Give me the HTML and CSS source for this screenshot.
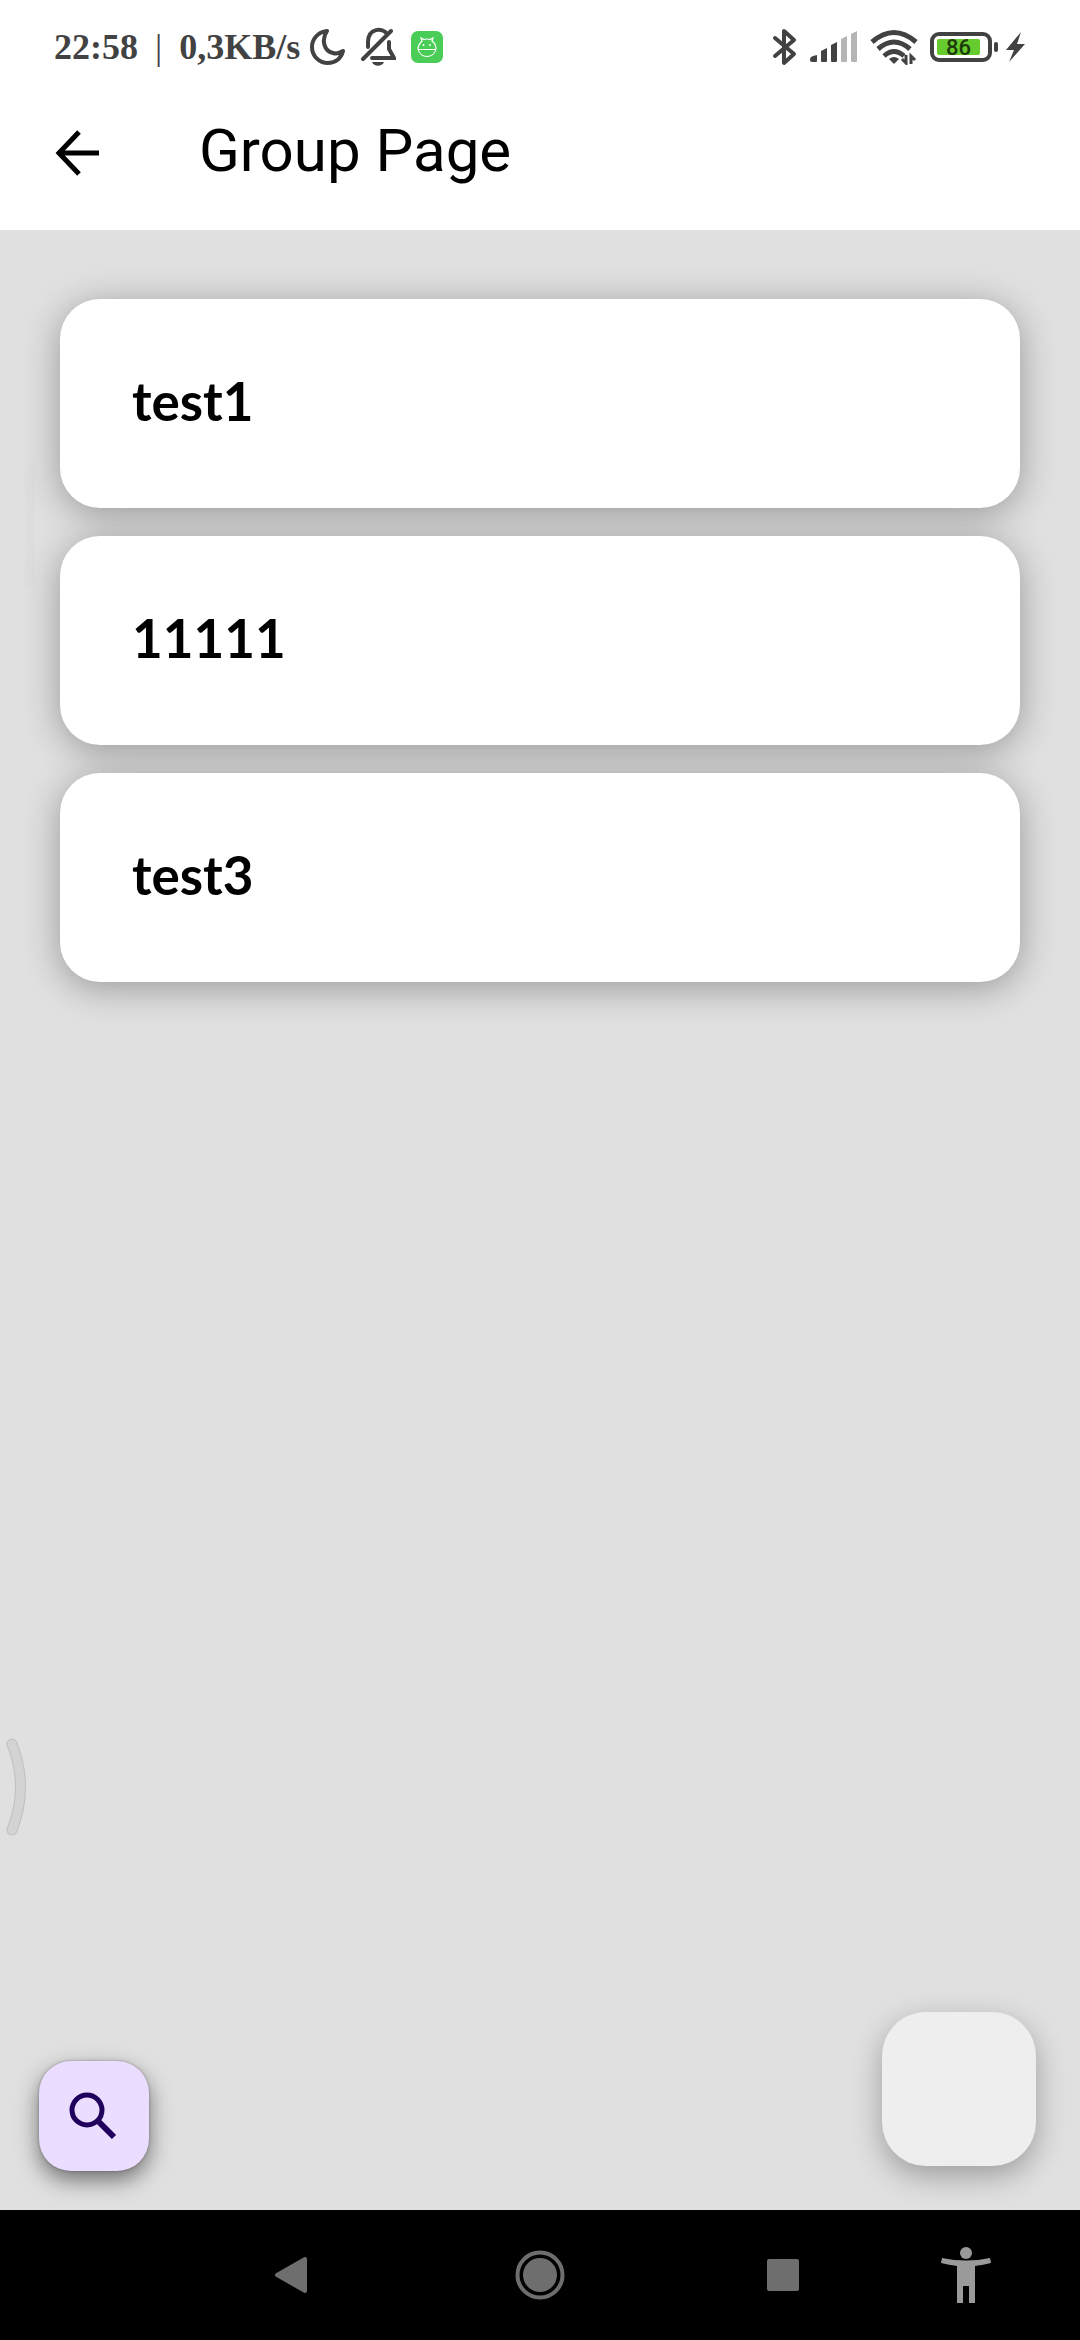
FILE: index.html
```html
<!DOCTYPE html>
<html lang="en">
<head>
<meta charset="utf-8">
<meta name="viewport" content="width=device-width, initial-scale=1">
<title>Group Page</title>
<link rel="stylesheet" href="styles.css">
</head>
<body>
<div class="status-bar">
  <div class="status-left">
    <span class="status-text">22:58 <span class="divider">|</span> 0,3KB/s</span>
    <svg class="moon" width="36" height="38" viewBox="0 0 36 38" fill="none" stroke="#424242" stroke-width="4" stroke-linejoin="round"><path d="M18 3C8 4 3 12 3 19c0 9 7 16 16 16 7 0 13-4 15-12-3 2-7 3-10 2C15 23 12 12 18 3Z"/></svg>
    <svg class="bell" width="36" height="40" viewBox="0 0 36 40" fill="none" stroke="#424242" stroke-width="4" stroke-linecap="round"><path d="M8 20v-5C8 1 23 0 27 7M3 32 31 4M29 15v7l5 9H12"/><path d="M12 35h12c-2 5-10 5-12 0Z" fill="#424242" stroke="none"/></svg>
    <svg class="app-badge" width="32" height="32" viewBox="0 0 32 32"><rect width="32" height="32" rx="7" fill="#4acd56"/><g fill="none" stroke="#fff" stroke-width="1.2"><path d="M7 18c0-4 2-6 4-8l-1-3 3 1.500q3-1 6 0L22 7l-1 3c3 2 4 4 4 8-2 10-16 10-18 0ZM7 18.500h18"/></g><circle cx="12.500" cy="14" r="1" fill="#fff"/><circle cx="19" cy="14" r="1" fill="#fff"/></svg>
  </div>
  <div class="status-right">
    <svg width="26" height="40" viewBox="0 0 26 40" fill="none" stroke="#424242" stroke-width="4" stroke-linejoin="round" stroke-linecap="round"><path d="M3 11 22 27 12 36V4l10 9L3 29"/></svg>
    <svg class="signal" width="48" height="32" viewBox="0 0 48 32"><g fill="#424242"><path d="M0 28q0-2 3-3l4-1v6q0 1-1 1H2q-2 0-2-2ZM11 20l6-3v13q0 1-1 1h-4q-1 0-1-1ZM21 14l6-3v19q0 1-1 1h-4q-1 0-1-1Z"/></g><g fill="#b5b5b5"><path d="M31 8l6-3v25q0 1-1 1h-4q-1 0-1-1ZM41 3l6-3v30q0 1-1 1h-4q-1 0-1-1Z"/></g></svg>
    <svg class="wifi" width="48" height="36" viewBox="0 0 48 36" fill="none" stroke="#424242" stroke-width="5"><path d="M2 13Q24-6 46 13M8 20q16-14 32 0M14 27q10-9 20 0"/><path d="M19 30q5-4 10 0l-5 5Z" fill="#424242" stroke="none"/><path d="M36 26v8l-4-4M41 35v-8l4 4" stroke-width="3"/></svg>
    <div class="battery"><span class="battery-level">86</span></div>
    <svg class="bolt" width="20" height="30" viewBox="0 0 20 30" fill="#424242"><path d="M15 0 0 18h8L3 30 19 12h-8Z"/></svg>
  </div>
</div>
<header class="app-bar">
  <button class="back" aria-label="Back"><svg width="44" height="46" viewBox="0 0 44 46" fill="none" stroke="#000" stroke-width="5"><path d="M24 2 4 23l20 21M4 23h40"/></svg></button>
  <h1 class="title">Group Page</h1>
</header>
<main class="content">
  <ul class="groups">
    <li><button class="group-card">test1</button></li>
    <li><button class="group-card">11111</button></li>
    <li><button class="group-card">test3</button></li>
  </ul>
  <div class="actions">
    <button class="fab search" aria-label="Search"><svg width="50" height="50" viewBox="0 0 50 50" fill="none" stroke="#21005d" stroke-width="5"><circle cx="18" cy="19" r="15"/><path d="m30 31 15 15" stroke-width="6"/></svg></button>
    <button class="fab add" aria-label="Add group"></button>
  </div>
  <div class="edge-strip"></div>
  <svg class="edge-handle" width="22" height="100" viewBox="0 0 22 100" fill="none" stroke-linecap="round"><path d="M6 7q17 43 0 86" stroke="#bfbfbf" stroke-width="11"/><path d="M6 7q17 43 0 86" stroke="#d3d3d3" stroke-width="9"/></svg>
</main>
<nav class="nav-bar">
  <button class="nav-back" aria-label="System back"><svg width="34" height="38" viewBox="0 0 34 38"><path d="M3 19 31 3v32Z" fill="#6e6e6e" stroke="#6e6e6e" stroke-width="4" stroke-linejoin="round"/></svg></button>
  <button aria-label="Home"><svg width="50" height="50" viewBox="0 0 50 50"><circle cx="25" cy="25" r="22.500" fill="none" stroke="#6e6e6e" stroke-width="4"/><circle cx="25" cy="25" r="17" fill="#6e6e6e"/></svg></button>
  <button aria-label="Recent apps"><svg width="32" height="32"><rect width="32" height="32" rx="2" fill="#6e6e6e"/></svg></button>
  <button aria-label="Accessibility"><svg width="50" height="58" viewBox="0 0 50 58" fill="#9a9a9a"><circle cx="25" cy="7" r="6"/><path d="M1 12q24 5 48 0l1 5q-8 2-16 3v37h-6V40h-6v17h-6V20q-8-1-16-3Z"/></svg></button>
</nav>
</body>
</html>
```
FILE: styles.css
```css
* {
  box-sizing: border-box;
}

body {
  margin: 0;
  min-height: 100vh;
  display: flex;
  flex-direction: column;
  background: #e0e0e0;
  color: #000;
  font-family: Roboto, sans-serif;
}

button {
  border: 0;
  padding: 0;
  background: none;
  color: inherit;
  font: inherit;
}

svg {
  display: block;
  flex: none;
}

.status-bar {
  display: flex;
  justify-content: space-between;
  align-items: center;
  padding: 0 54px;
  height: 94px;
  background: #fff;
  color: #424242;
}

.status-left,
.status-right {
  display: flex;
  align-items: center;
}

.status-left {
  gap: 15px;
}

.status-right {
  gap: 12px;
}

.status-text {
  margin-right: -6px;
  font: bold 36px/40px "Liberation Serif", serif;
  white-space: nowrap;
}

.divider {
  margin: 0 8px;
  font-weight: normal;
}

.battery {
  position: relative;
  display: flex;
  width: 62px;
  height: 30px;
  margin-right: 2px;
  padding: 3px;
  border: 4px solid #424242;
  border-radius: 9px;
}

.battery::after {
  content: "";
  position: absolute;
  right: -10px;
  top: 6px;
  width: 4px;
  height: 10px;
  border-radius: 2px;
  background: #424242;
}

.battery-level {
  width: 90%;
  border-radius: 2px;
  background: #66cb2c;
  color: #1c3a0c;
  font: 500 22px/17px Roboto, sans-serif;
  text-align: center;
}

.app-bar {
  display: flex;
  align-items: center;
  gap: 100px;
  height: 136px;
  padding: 0 55px 22px;
  background: #fff;
}

.back {
  padding-top: 4px;
}

.title {
  margin: 0;
  font-size: 60px;
  font-weight: 400;
  line-height: 72px;
}

.content {
  position: relative;
  flex: 1;
  display: flex;
  flex-direction: column;
  justify-content: space-between;
}

.groups {
  display: flex;
  flex-direction: column;
  gap: 28px;
  margin: 0;
  padding: 69px 60px 0;
  list-style: none;
}

.group-card {
  display: block;
  width: 100%;
  padding: 70px 72px 75px;
  border-radius: 40px;
  background: #fff;
  box-shadow: 0 6px 36px rgba(0, 0, 0, 0.32);
  font: bold 53px/64px Lato, sans-serif;
  text-align: left;
}

.groups li {
  position: relative;
}

.actions {
  display: flex;
  justify-content: space-between;
  align-items: flex-end;
}

.fab {
  display: grid;
  place-items: center;
}

.search {
  width: 110px;
  height: 110px;
  margin: 39px;
  border-radius: 32px;
  background: #eaddff;
  box-shadow: 0 9px 22px rgba(0, 0, 0, 0.5), 0 0 3px rgba(0, 0, 0, 0.3);
}

.add {
  width: 154px;
  height: 154px;
  margin: 44px;
  border-radius: 44px;
  background: #eee;
  box-shadow: 0 10px 30px rgba(0, 0, 0, 0.3);
}

.edge-strip {
  position: absolute;
  left: 25px;
  top: 234px;
  width: 10px;
  height: 122px;
  border-radius: 4px;
  background: rgba(0, 0, 0, 0.01);
}

.edge-handle {
  position: absolute;
  left: 6px;
  bottom: 373px;
}

.nav-bar {
  display: grid;
  grid-template-columns: 248fr 250fr 236fr 130fr;
  height: 130px;
  padding: 0 4.5% 0 15.5%;
  background: #000;
}

.nav-bar button {
  display: grid;
  place-items: center;
}
```
